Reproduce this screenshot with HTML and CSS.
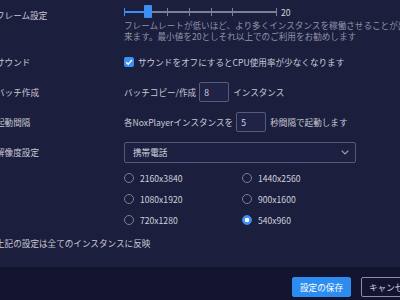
FILE: index.html
```html
<!DOCTYPE html>
<html lang="ja">
<head>
<meta charset="utf-8">
<link rel="stylesheet" href="styles.css">
</head>
<body>
<div class="panel">
  <div class="row row-frame">
    <div class="label">フレーム設定</div>
    <div class="content">
      <div class="slider-line">
        <div class="track">
          <div class="fill"></div>
          <span class="tick t0"></span><span class="tick t1"></span><span class="tick t2"></span><span class="tick t3"></span><span class="tick t4"></span><span class="tick t5"></span>
          <div class="thumb"></div>
        </div>
        <span class="val">20</span>
      </div>
      <p class="desc">フレームレートが低いほど、より多くインスタンスを稼働させることが出<br>来ます。最小値を20としそれ以上でのご利用をお勧めします</p>
    </div>
  </div>
  <div class="row row-std">
    <div class="label">サウンド</div>
    <div class="content">
      <span class="check"><svg width="10" height="10" viewBox="0 0 10 10"><polyline points="2.2,5.2 4.2,7.2 8,2.9" fill="none" stroke="#fff" stroke-width="1.4"/></svg></span>
      <span>サウンドをオフにするとCPU使用率が少なくなります</span>
    </div>
  </div>
  <div class="row row-std">
    <div class="label">バッチ作成</div>
    <div class="content">
      <span>バッチコピー/作成</span>
      <span class="num">8</span>
      <span>インスタンス</span>
    </div>
  </div>
  <div class="row row-std">
    <div class="label">起動間隔</div>
    <div class="content">
      <span>各NoxPlayerインスタンスを</span>
      <span class="num">5</span>
      <span>秒間隔で起動します</span>
    </div>
  </div>
  <div class="row row-std">
    <div class="label">解像度設定</div>
    <div class="content">
      <div class="select">
        <span>携帯電話</span>
        <svg width="8" height="5" viewBox="0 0 8 5"><polyline points="0.7,0.7 4,4 7.3,0.7" fill="none" stroke="#9c9fb4" stroke-width="1.2"/></svg>
      </div>
    </div>
  </div>
  <div class="radios">
    <div class="opt"><span class="radio"></span>2160x3840</div>
    <div class="opt"><span class="radio"></span>1440x2560</div>
    <div class="opt"><span class="radio"></span>1080x1920</div>
    <div class="opt"><span class="radio"></span>900x1600</div>
    <div class="opt"><span class="radio"></span>720x1280</div>
    <div class="opt"><span class="radio on"></span>540x960</div>
  </div>
  <div class="row row-note">
    <div class="label">上記の設定は全てのインスタンスに反映</div>
  </div>
</div>
<div class="footer">
  <button class="btn primary">設定の保存</button>
  <button class="btn ghost">キャンセル</button>
</div>
</body>
</html>
```
FILE: styles.css
```css
html, body {
  margin: 0;
  padding: 0;
  overflow: hidden;
}
body {
  width: 400px;
  height: 300px;
  background: #1c1e3d;
  font-family: "Noto Sans CJK JP", "Noto Sans", sans-serif;
  font-size: 8.6px;
  color: #c9cad6;
}
.panel {
  height: 267px;
  display: flex;
  flex-direction: column;
  margin-left: -4px;
}
.row {
  display: flex;
  align-items: center;
  flex: none;
}
.label {
  width: 128px;
  flex: none;
  white-space: nowrap;
  line-height: 12px;
}
.content {
  display: flex;
  align-items: center;
  white-space: nowrap;
}
.row-frame {
  height: 47px;
  align-items: flex-start;
}
.row-frame .label {
  padding-top: 9px;
}
.row-frame .content {
  flex-direction: column;
  align-items: flex-start;
  padding-top: 2px;
}
.slider-line {
  display: flex;
  align-items: center;
  height: 20px;
}
.track {
  position: relative;
  width: 153px;
  height: 2px;
  background: #7c7f95;
}
.fill {
  position: absolute;
  left: 0;
  top: 0;
  width: 22px;
  height: 2px;
  background: #3b8ff5;
}
.tick {
  position: absolute;
  top: -3px;
  width: 1px;
  height: 8px;
  background: #7c7f95;
}
.t0 { left: 0; background: #3b8ff5; }
.t1 { left: 43px; }
.t2 { left: 65px; }
.t3 { left: 87px; }
.t4 { left: 108px; }
.t5 { left: 152px; }
.thumb {
  position: absolute;
  left: 20px;
  top: -6px;
  width: 8px;
  height: 13px;
  border-radius: 1px;
  background: #3b8ff5;
}
.val {
  margin-left: 4px;
  color: #d4d5de;
}
.desc {
  margin: -2px 0 0;
  line-height: 10.5px;
  color: #8f92a8;
}
.row-std {
  height: 30px;
}
.check {
  width: 10px;
  height: 10px;
  border-radius: 2px;
  background: #3b8ff5;
  display: flex;
  margin-right: 4px;
}
.num {
  width: 30px;
  height: 20px;
  box-sizing: border-box;
  border: 1px solid #585b7a;
  border-radius: 2px;
  background: #202246;
  padding-left: 4px;
  line-height: 18px;
  margin: 0 4px 0 3px;
  color: #d4d5de;
}
.select {
  width: 232px;
  height: 21px;
  box-sizing: border-box;
  border: 1px solid #56597a;
  border-radius: 2px;
  background: #1e2042;
  display: flex;
  align-items: center;
  justify-content: space-between;
  padding: 0 6px 0 8px;
  color: #d4d5de;
}
.radios {
  display: grid;
  grid-template-columns: 118px 1fr;
  margin-left: 128px;
  flex: none;
}
.opt {
  height: 21px;
  display: flex;
  align-items: center;
  color: #d0d1dc;
}
.radio {
  width: 10px;
  height: 10px;
  box-sizing: border-box;
  border: 1px solid #7d8096;
  border-radius: 50%;
  margin-right: 6px;
}
.radio.on {
  border-color: #3b8ff5;
  background: radial-gradient(circle, #ffffff 0 2px, #3b8ff5 2.6px);
}
.row-note {
  height: 26px;
}
.footer {
  height: 33px;
  background: #131430;
  box-sizing: border-box;
  padding: 10px 0 0 292px;
  display: flex;
  gap: 10px;
}
.btn {
  flex: none;
  width: 59px;
  height: 20px;
  padding: 0;
  border-radius: 2px;
  font-family: inherit;
  font-size: 8.6px;
}
.primary {
  background: #2d8cf0;
  border: 1px solid #2d8cf0;
  color: #ffffff;
}
.ghost {
  background: transparent;
  border: 1px solid #8c8ea3;
  color: #d0d1dc;
}
```
